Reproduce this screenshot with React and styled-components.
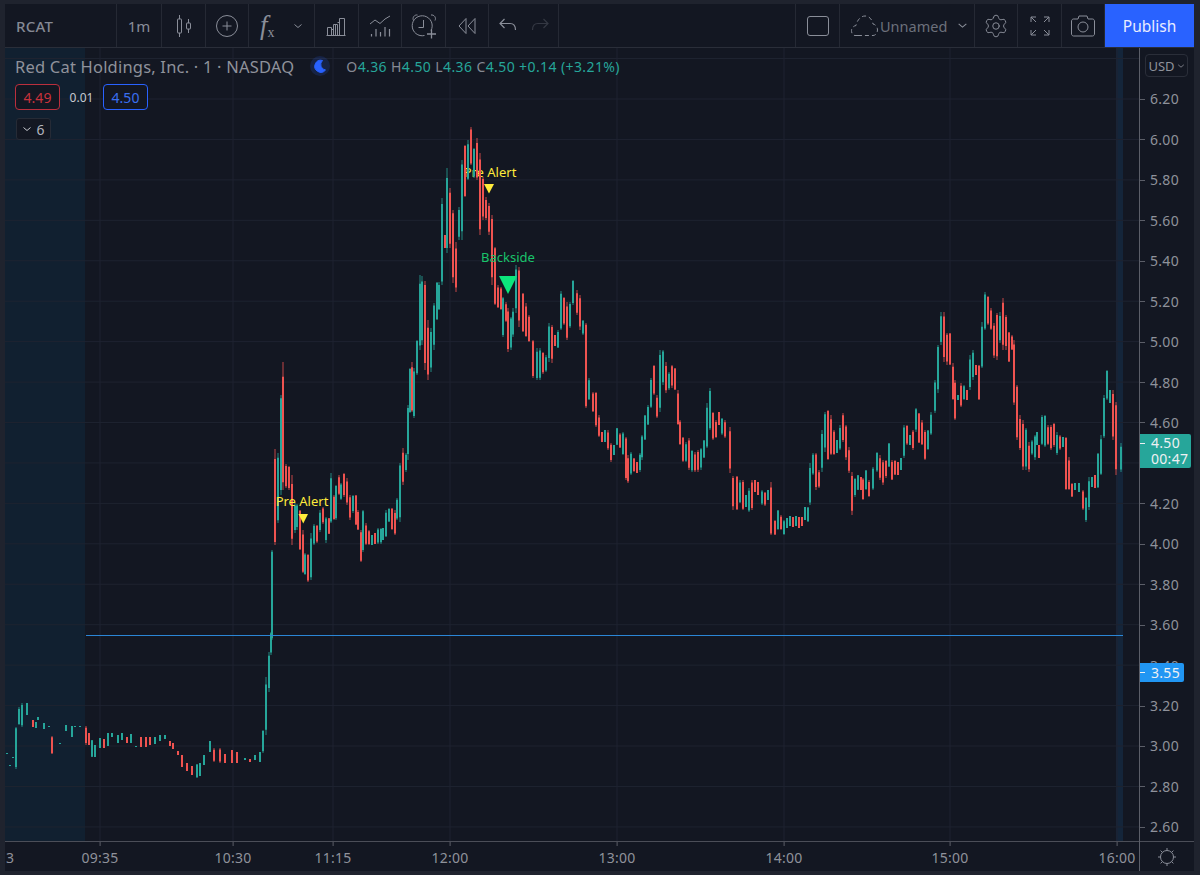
import styled, { createGlobalStyle } from "styled-components";
import { Settings } from "lucide-react";

const GlobalStyle = createGlobalStyle`
  * { box-sizing: border-box; }
  html, body { margin: 0; padding: 0; background: #1f232e; }
`;

const FONT = `"Noto Sans", "Open Sans", sans-serif`;
const UP = "#26a69a";
const DOWN = "#ef5350";

// x, top, bottom in page pixels, read off the screenshot
const BARS = [
  [7,753,754,"g"],[10,765,766,"g"],[13,757,758,"g"],[16,727,769,"g"],[19,707,725,"g"],[22,703,727,"g"],[27,703,715,"g"],
  [33,720,727,"r"],[36,722,728,"g"],[38,717,720,"g"],[44,723,729,"g"],[49,726,727,"g"],[52,736,754,"r"],[60,743,744,"g"],
  [66,725,731,"g"],[72,726,737,"g"],[75,726,727,"g"],[80,726,727,"g"],
  [86,726,745,"r"],[89,733,745,"r"],[92,740,757,"g"],[95,745,757,"g"],[100,738,748,"g"],[104,739,748,"r"],[108,733,746,"g"],[112,733,737,"g"],
  [118,735,743,"g"],[122,733,740,"g"],[127,737,743,"r"],[131,734,743,"g"],[136,746,747,"g"],[141,737,747,"r"],[146,737,747,"r"],[150,737,745,"r"],
  [155,737,744,"g"],[160,735,741,"g"],[165,735,739,"g"],[170,741,746,"r"],[173,743,749,"r"],[178,751,755,"r"],[182,755,767,"r"],[187,763,771,"r"],
  [192,766,775,"r"],[197,764,778,"g"],[200,763,776,"g"],[204,755,765,"g"],[210,741,752,"g"],[214,748,762,"r"],[220,748,763,"r"],[225,754,763,"r"],
  [232,750,763,"r"],[237,752,763,"r"],[245,758,760,"g"],[250,759,762,"r"],[255,755,760,"g"],[260,752,762,"g"],[263,730,753,"g"],[266,677,735,"g"],
  [269,652,692,"g"],[271,632,655,"g"],[272,550,640,"g"],[275,449,545,"r"],[278,453,523,"g"],[281,395,495,"g"],[283,362,490,"r"],[286,464,488,"r"],
  [289,466,490,"r"],[292,475,545,"r"],[295,503,533,"g"],[297,504,530,"g"],[300,510,550,"r"],[303,530,573,"r"],[305,553,575,"g"],[308,554,582,"r"],
  [311,533,580,"g"],[314,524,545,"g"],[317,525,543,"r"],[320,510,532,"g"],[323,507,524,"r"],[326,517,543,"g"],[329,518,534,"r"],[331,473,523,"g"],
  [334,495,520,"r"],[336,485,520,"g"],[339,475,495,"r"],[341,483,500,"g"],[344,473,497,"r"],[347,478,505,"r"],[350,495,520,"r"],[353,495,513,"g"],
  [356,495,525,"r"],[358,510,530,"r"],[361,530,562,"r"],[363,510,552,"g"],[366,523,545,"r"],[369,530,545,"r"],[372,535,545,"g"],[375,533,544,"r"],
  [378,528,544,"g"],[381,528,544,"g"],[383,528,540,"g"],[386,510,537,"g"],[389,508,522,"g"],[392,508,530,"r"],[395,510,535,"r"],[397,498,520,"g"],
  [400,463,522,"g"],[403,448,485,"r"],[406,453,472,"g"],[408,405,460,"g"],[410,368,413,"g"],[412,362,412,"r"],[414,368,418,"g"],[417,340,375,"g"],
  [420,275,350,"g"],[422,276,345,"g"],[425,281,370,"r"],[428,320,380,"r"],[431,328,372,"g"],[434,303,350,"g"],[437,282,320,"g"],[439,282,310,"g"],
  [442,198,285,"g"],[445,235,248,"r"],[447,168,253,"g"],[450,188,248,"r"],[453,210,283,"r"],[456,242,292,"r"],[459,207,240,"g"],[462,160,240,"g"],
  [465,145,197,"r"],[468,140,180,"g"],[471,127,165,"r"],[474,148,178,"g"],[477,138,180,"r"],[480,153,235,"r"],[483,177,220,"r"],[486,197,220,"r"],
  [489,203,235,"r"],[492,215,285,"r"],[495,247,305,"r"],[498,285,308,"r"],[501,287,310,"r"],[503,297,337,"g"],[506,302,322,"r"],[508,308,352,"r"],
  [511,317,350,"g"],[513,308,337,"g"],[516,265,313,"g"],[519,267,327,"r"],[523,293,332,"r"],[526,303,337,"r"],[529,315,342,"r"],[533,340,378,"r"],
  [537,348,380,"g"],[540,348,380,"g"],[543,352,374,"r"],[546,355,372,"g"],[549,323,362,"g"],[552,325,363,"r"],[555,335,346,"r"],[558,330,348,"g"],
  [561,291,330,"g"],[564,297,325,"r"],[567,302,340,"r"],[570,302,328,"g"],[573,280,305,"g"],[577,290,315,"r"],[580,295,330,"r"],[583,320,335,"g"],
  [586,323,408,"r"],[589,378,400,"g"],[593,392,412,"r"],[596,392,427,"r"],[599,415,437,"r"],[602,432,442,"r"],[605,430,442,"g"],[608,430,450,"r"],
  [611,443,462,"r"],[614,445,455,"g"],[617,428,445,"g"],[620,433,448,"r"],[623,432,455,"g"],[626,437,480,"r"],[628,455,483,"r"],[631,452,475,"g"],
  [634,458,472,"r"],[637,462,473,"r"],[640,453,472,"g"],[642,435,460,"g"],[645,415,440,"g"],[648,405,425,"g"],[651,378,408,"g"],[654,365,395,"r"],
  [657,395,418,"r"],[660,350,412,"g"],[663,350,385,"g"],[666,362,393,"r"],[669,372,390,"g"],[672,365,388,"r"],[675,368,390,"r"],[678,390,425,"r"],
  [680,420,445,"r"],[683,437,462,"r"],[686,442,462,"g"],[689,438,470,"r"],[692,450,472,"g"],[695,452,472,"r"],[698,450,472,"r"],[701,448,470,"g"],
  [704,440,458,"g"],[707,403,448,"g"],[710,388,430,"g"],[713,412,440,"r"],[716,420,438,"r"],[719,412,425,"r"],[722,418,435,"g"],[725,420,438,"r"],
  [730,427,473,"r"],[733,476,510,"r"],[737,476,510,"r"],[740,480,503,"g"],[743,480,510,"r"],[746,495,507,"g"],[749,488,512,"g"],[752,480,510,"r"],
  [755,480,492,"r"],[758,482,495,"r"],[762,490,505,"g"],[765,492,506,"r"],[768,490,500,"g"],[771,482,535,"r"],[775,520,535,"r"],[778,510,530,"g"],
  [781,515,530,"r"],[784,520,535,"g"],[787,518,528,"g"],[790,516,526,"g"],[793,517,527,"r"],[796,516,526,"g"],[799,517,528,"r"],[802,517,526,"r"],
  [805,507,520,"g"],[808,507,522,"g"],[810,463,505,"g"],[813,453,475,"g"],[816,453,490,"r"],[819,470,488,"r"],[822,430,472,"g"],[825,412,452,"g"],
  [828,410,460,"r"],[831,415,455,"r"],[834,430,455,"r"],[837,440,453,"g"],[840,425,450,"g"],[843,413,442,"r"],[846,425,460,"r"],[849,447,473,"r"],
  [852,472,515,"r"],[855,478,497,"g"],[858,475,490,"g"],[861,477,490,"r"],[863,478,500,"r"],[866,470,490,"g"],[869,480,497,"r"],[873,467,490,"g"],
  [877,452,472,"g"],[880,455,480,"r"],[883,460,485,"r"],[886,460,478,"r"],[889,443,467,"g"],[892,460,480,"r"],[895,460,475,"r"],[898,462,475,"r"],
  [901,458,470,"g"],[904,425,458,"g"],[907,425,445,"r"],[910,435,445,"g"],[913,430,450,"r"],[916,408,432,"g"],[919,413,443,"r"],[922,420,445,"r"],
  [925,430,460,"r"],[928,430,450,"g"],[931,412,435,"g"],[935,380,413,"g"],[938,345,393,"g"],[941,312,345,"g"],[944,312,362,"r"],[947,333,365,"r"],
  [950,333,365,"r"],[953,363,400,"r"],[955,380,420,"r"],[958,395,400,"g"],[961,383,407,"r"],[964,385,400,"g"],[967,390,400,"r"],[970,355,390,"g"],
  [973,350,380,"g"],[976,365,375,"r"],[979,365,400,"r"],[982,322,368,"g"],[985,292,330,"g"],[988,296,325,"r"],[991,308,330,"r"],[994,323,358,"r"],
  [997,313,360,"r"],[1000,312,343,"g"],[1003,298,350,"r"],[1006,315,350,"r"],[1009,332,362,"r"],[1012,335,350,"r"],[1014,340,405,"r"],[1017,385,440,"r"],
  [1020,415,450,"r"],[1023,420,470,"r"],[1026,428,470,"g"],[1029,442,472,"r"],[1032,440,455,"g"],[1035,435,460,"g"],[1037,432,445,"g"],[1039,445,458,"r"],
  [1042,415,445,"g"],[1045,415,447,"g"],[1048,425,445,"r"],[1051,425,450,"r"],[1054,423,447,"r"],[1057,432,455,"g"],[1060,435,450,"r"],[1063,437,447,"g"],
  [1066,437,490,"r"],[1069,457,490,"r"],[1072,483,497,"r"],[1075,483,490,"g"],[1079,483,492,"g"],[1083,490,510,"r"],[1086,497,522,"g"],[1089,477,510,"g"],
  [1092,477,487,"g"],[1095,475,488,"r"],[1098,453,488,"g"],[1101,435,475,"g"],[1104,395,438,"g"],[1107,370,400,"g"],[1110,390,403,"g"],[1113,390,440,"r"],
  [1116,402,475,"r"],[1121,443,472,"g"],
];

const PRICES = ["6.20","6.00","5.80","5.60","5.40","5.20","5.00","4.80","4.60","4.40","4.20","4.00","3.80","3.60","3.40","3.20","3.00","2.80","2.60"];
const HIDDEN_PRICE = "4.40"; // sits fully under the last price tag
const STEP = 40.44;
const FIRST_Y = 99;
const TIMES = [["09:35",100],["10:30",233],["11:15",333],["12:00",450],["13:00",617],["14:00",784],["15:00",950],["16:00",1117]];

function buildPaths() {
  const d = { g: { wick: "", body: "" }, r: { wick: "", body: "" } };
  BARS.forEach(([x, top, bottom, c], i) => {
    const h = bottom - top;
    const seed = (i * 37) % 10;
    const bodyTop = h < 14 ? top : top + h * (0.02 + seed * 0.012);
    const bodyBottom = h < 14 ? bottom : bottom - h * (0.02 + ((seed * 3) % 10) * 0.01);
    d[c].wick += `M${x} ${top}V${bottom}`;
    d[c].body += `M${x} ${bodyTop.toFixed(1)}V${bodyBottom.toFixed(1)}`;
  });
  return d;
}
const candlePaths = buildPaths();

const Page = styled.div`
  width: 1200px;
  height: 875px;
  overflow: hidden;
  padding: 4px 6px 4px 5px;
  background: #1f232e;
  display: flex;
  flex-direction: column;
  font-family: ${FONT};
`;

const Toolbar = styled.div`
  height: 44px;
  flex: none;
  display: flex;
  background: #131722;
  border-bottom: 1px solid #2a2e39;
  color: #8a8e99;
`;

const Cell = styled.div`
  width: ${({ $w }) => $w}px;
  flex: none;
  display: flex;
  align-items: center;
  justify-content: ${({ $start }) => ($start ? "flex-start" : "center")};
  padding-left: ${({ $start }) => ($start ? "11px" : "0")};
  gap: ${({ $gap }) => $gap || 0}px;
  border-right: 1px solid #252934;
`;

const Spacer = styled.div`
  flex: 1;
  border-right: 1px solid #252934;
`;

const Symbol = styled.span`
  font-size: 15px;
  font-weight: 500;
  color: #858994;
  letter-spacing: 0.2px;
`;

const ToolText = styled.span`
  font-size: ${({ $dim }) => ($dim ? "14.5px" : "15px")};
  color: ${({ $dim }) => ($dim ? "#6c707b" : "#8a8e99")};
`;

const Fx = styled.span`
  font-family: "Liberation Serif", serif;
  font-style: italic;
  font-size: 27px;
  line-height: 1;
  color: #8a8e99;
  sub {
    font-size: 14px;
    font-style: normal;
    vertical-align: -3px;
  }
`;

const Publish = styled.div`
  width: 89px;
  flex: none;
  background: #2962ff;
  color: #e8ecff;
  font-size: 15.5px;
  display: flex;
  align-items: center;
  justify-content: center;
`;

const Icon = styled.svg`
  display: block;
  fill: none;
  stroke: ${({ $color }) => $color || "currentColor"};
  stroke-width: 1;
  flex: none;
`;

const Gap = styled.span`
  width: 6px;
  flex: none;
`;

const ChartRow = styled.div`
  height: 793px;
  flex: none;
  display: grid;
  grid-template-columns: 1134px 55px;
  background: #131722;
`;

const Plot = styled.div`
  position: relative;
  overflow: hidden;
`;

const Canvas = styled.svg`
  display: block;
  width: 1134px;
  height: 793px;
`;

const MarkerText = styled.text`
  font-family: ${FONT};
  font-size: 13px;
  text-anchor: middle;
  fill: ${({ $color }) => $color};
`;

const Legend = styled.div`
  position: absolute;
  left: 10px;
  top: 7px;
  display: flex;
  flex-direction: column;
  align-items: flex-start;
`;

const TitleRow = styled.div`
  height: 22px;
  display: flex;
  align-items: center;
`;

const Title = styled.span`
  font-size: 16.5px;
  color: #8f929b;
  letter-spacing: 0.2px;
  white-space: nowrap;
`;

const Moon = styled.span`
  width: 20px;
  height: 20px;
  margin: 0 16px 0 16px;
  border-radius: 50%;
  background: rgba(41, 98, 255, 0.16);
  display: flex;
  align-items: center;
  justify-content: center;
`;

const Ohlc = styled.span`
  font-size: 14px;
  color: ${UP};
  white-space: pre;
  letter-spacing: 0.4px;
  b {
    font-weight: 400;
    color: #868993;
  }
`;

const QuoteRow = styled.div`
  display: flex;
  align-items: center;
  margin-top: 7px;
`;

const QuoteBox = styled.span`
  width: 45px;
  height: 26px;
  border: 1px solid ${({ $color }) => $color};
  border-radius: 4px;
  background: #131722;
  color: ${({ $text }) => $text};
  font-size: 14px;
  display: flex;
  align-items: center;
  justify-content: center;
`;

const Spread = styled.span`
  width: 43px;
  text-align: center;
  font-size: 12px;
  color: #c8cad0;
`;

const Collapse = styled.div`
  width: 35px;
  height: 22px;
  margin: 8px 0 0 1px;
  border: 1px solid #262b36;
  border-radius: 3px;
  background: #131722;
  color: #b2b5be;
  font-size: 14px;
  display: flex;
  align-items: center;
  justify-content: center;
  gap: 4px;
`;

const PriceAxis = styled.div`
  position: relative;
  border-left: 1px solid #5b5e68;
  padding-top: ${FIRST_Y - 48 - STEP / 2}px;
  display: flex;
  flex-direction: column;
`;

const PriceLabel = styled.div`
  height: ${STEP}px;
  flex: none;
  padding-left: 10px;
  display: flex;
  align-items: center;
  font-size: 14px;
  letter-spacing: 0.3px;
  color: #8f929b;
  position: relative;
  &::before {
    content: "";
    position: absolute;
    left: 0;
    top: 50%;
    width: 5px;
    height: 1px;
    background: #5b5e68;
  }
`;

const Currency = styled.div`
  position: absolute;
  left: 5px;
  top: 6px;
  width: 43px;
  height: 23px;
  border: 1px solid #2a2e39;
  border-radius: 4px;
  background: #131722;
  color: #8f929b;
  font-size: 13px;
  display: flex;
  align-items: center;
  justify-content: center;
  gap: 2px;
`;

const PriceTag = styled.div`
  position: absolute;
  left: 0;
  top: ${({ $top }) => $top}px;
  width: ${({ $w }) => $w}px;
  height: ${({ $h }) => $h}px;
  padding-left: 11px;
  background: ${({ $bg }) => $bg};
  border-radius: 0 2px 2px 0;
  color: #eef0f3;
  font-size: 14px;
  line-height: 16px;
  letter-spacing: 0.3px;
  display: flex;
  flex-direction: column;
  justify-content: center;
  &::before {
    content: "";
    position: absolute;
    left: 0;
    top: 9px;
    width: 5px;
    height: 1px;
    background: #eef0f3;
  }
`;

const BottomRow = styled.div`
  height: 30px;
  flex: none;
  display: grid;
  grid-template-columns: 1134px 55px;
  background: #131722;
  border-top: 1px solid #4b4e58;
`;

const TimeAxis = styled.div`
  position: relative;
  overflow: hidden;
`;

const TimeLabel = styled.span`
  position: absolute;
  top: 6px;
  transform: translateX(-50%);
  font-size: 14px;
  letter-spacing: 0.2px;
  color: #8f929b;
  &::before {
    content: "";
    position: absolute;
    left: 50%;
    top: -6px;
    width: 1px;
    height: 4px;
    background: #5b5e68;
  }
`;

const PartialLabel = styled.span`
  position: absolute;
  top: 6px;
  left: 1px;
  font-size: 14px;
  color: #8f929b;
`;

const Corner = styled.div`
  border-left: 1px solid #5b5e68;
  color: #8a8e99;
  display: flex;
  align-items: center;
  justify-content: center;
`;

function Chevron({ size = 10, color }) {
  return (
    <Icon $color={color} width={size} height={size} viewBox="0 0 10 10">
      <path d="M1.5 3.5 5 6.5l3.5-3" />
    </Icon>
  );
}

function Chart() {
  return (
    <Canvas viewBox="5 48 1134 793">
      <rect x="5" y="48" width="80" height="793" fill="#112030" />
      <rect x="1116" y="48" width="7" height="793" fill="#14253a" />
      {PRICES.map((p, i) => (
        <line key={p} x1="5" x2="1139" y1={FIRST_Y + i * STEP} y2={FIRST_Y + i * STEP} stroke="#1e2330" />
      ))}
      <line x1="5" x2="1139" y1="58.5" y2="58.5" stroke="#1e2330" />
      {TIMES.map(([t, x]) => (
        <line key={t} x1={x} x2={x} y1="48" y2="841" stroke="#1e2330" />
      ))}

      <MarkerText x="490" y="176.5" $color="#ffeb3b">Pre Alert</MarkerText>

      <g fill="none">
        <path d={candlePaths.g.wick} stroke={UP} strokeOpacity="0.8" strokeWidth="1" />
        <path d={candlePaths.g.body} stroke={UP} strokeWidth="2" />
        <path d={candlePaths.r.wick} stroke={DOWN} strokeOpacity="0.8" strokeWidth="1" />
        <path d={candlePaths.r.body} stroke={DOWN} strokeWidth="2" />
      </g>

      <rect x="86" y="635" width="1037" height="1" fill="#2b86d6" />

      <MarkerText x="302" y="505.5" $color="#ffeb3b">Pre Alert</MarkerText>
      <path d="M298.5 514h9.500l-4.750 9.500z" fill="#ffeb3b" />
      <path d="M484 184h10l-5 9.500z" fill="#ffeb3b" />
      <MarkerText x="508" y="262" $color="#19c46b">Backside</MarkerText>
      <path d="M499 276h18l-9 18z" fill="#0ce67c" />
    </Canvas>
  );
}

export default function App() {
  return (
    <>
      <GlobalStyle />
      <Page>
        <Toolbar>
          <Cell $w={112} $start><Symbol>RCAT</Symbol></Cell>
          <Cell $w={45}><ToolText>1m</ToolText></Cell>
          <Cell $w={44}>
            <Icon width="26" height="26" viewBox="0 0 26 26">
              <path d="M8.500 2v4M8.500 20v4M17.500 6v4M17.500 16v4" />
              <rect x="6.500" y="6" width="4" height="14" rx="0.5" />
              <rect x="15.500" y="10" width="4" height="6" rx="0.5" />
            </Icon>
          </Cell>
          <Cell $w={43}>
            <Icon width="24" height="24" viewBox="0 0 24 24">
              <circle cx="12" cy="12" r="10.500" />
              <path d="M12 7.500v9M7.500 12h9" />
            </Icon>
          </Cell>
          <Cell $w={66} $gap={18} $start>
            <Fx>f<sub>x</sub></Fx>
            <Chevron />
          </Cell>
          <Cell $w={43.500}>
            <Icon width="22" height="22" viewBox="0 0 22 22">
              <path d="M1.500 20.500h19M2.500 20.500v-8h4v8M8.500 20.500v-11h4v11M14.500 20.500v-17h5v17M10.500 9.500v11M6.500 14.500h2M12.500 7.500h2" />
            </Icon>
          </Cell>
          <Cell $w={43.500}>
            <Icon width="24" height="24" viewBox="0 0 24 24">
              <path d="M2 10l5-4 5 3.500L17 5l5-3" />
              <path d="M3.500 20v2.500M8 15v7.500M12.500 18v4.500M17 13v9.500M21.500 15v7.500" strokeWidth="1.200" />
            </Icon>
          </Cell>
          <Cell $w={44}>
            <Icon width="28" height="28" viewBox="0 0 28 28">
              <path d="M21 18.500A10 10 0 1 0 14.500 23.500" />
              <path d="M3.500 8.500c-1.500-3 1-6 4-5.500M21 3c3-.5 5.500 2.500 4 5.500" />
              <path d="M13.500 8v7.500H8.500" />
              <path d="M21.500 17.500v9M17 22h9" strokeWidth="1.300" />
            </Icon>
          </Cell>
          <Cell $w={43}>
            <Icon width="22" height="22" viewBox="0 0 22 22">
              <path d="M10 3.500 3 11l7 7.500zM19 3.500 12 11l7 7.500z" />
            </Icon>
          </Cell>
          <Cell $w={70} $gap={12}>
            <Icon width="20" height="20" viewBox="0 0 20 20">
              <path d="M2 7.500h10c3.500 0 5.500 2.500 5.500 6.500M6.500 3 2 7.500 6.500 12" strokeWidth="1.200" />
            </Icon>
            <Icon $color="#343843" width="20" height="20" viewBox="0 0 20 20">
              <path d="M18 7.500H8c-3.500 0-5.500 2.500-5.500 6.500M13.500 3 18 7.500 13.500 12" strokeWidth="1.200" />
            </Icon>
          </Cell>
          <Spacer />
          <Cell $w={44}>
            <Icon width="22" height="20" viewBox="0 0 22 20">
              <rect x="0.500" y="0.500" width="21" height="19" rx="2.500" />
            </Icon>
          </Cell>
          <Cell $w={135} $gap={2} $start>
            <Icon width="27" height="22" viewBox="0 0 27 22">
              <path d="M7 20.500H4C1 20.500 .5 17 .5 15.500 .5 13 2.500 11 5 10.500 6 5 10 1 14 1c4 0 7 3 8 8 2.500.5 4.500 3 4.500 6 0 3-2 5.500-4.500 5.500H7z" strokeDasharray="4 3" />
            </Icon>
            <ToolText $dim>Unnamed</ToolText>
            <Gap />
            <Chevron size={11} />
          </Cell>
          <Cell $w={43}>
            <Settings size={26} strokeWidth={0.9} />
          </Cell>
          <Cell $w={44}>
            <Icon width="20" height="20" viewBox="0 0 20 20">
              <path d="M1 6V1h5M1 1l5 5M14 1h5v5M19 1l-5 5M1 14v5h5M1 19l5-5M14 19h5v-5M19 19l-5-5" />
            </Icon>
          </Cell>
          <Cell $w={43}>
            <Icon width="24" height="22" viewBox="0 0 24 22">
              <path d="M2.500 4H7l1-3h8l1 3h4.500c1 0 2 1 2 2v13c0 1-1 2-2 2h-19c-1 0-2-1-2-2V6c0-1 1-2 2-2z" />
              <circle cx="12" cy="12" r="5" />
            </Icon>
          </Cell>
          <Publish>Publish</Publish>
        </Toolbar>

        <ChartRow>
          <Plot>
            <Chart />
            <Legend>
              <TitleRow>
                <Title>Red Cat Holdings, Inc. · 1 · NASDAQ</Title>
                <Moon>
                  <Icon width="14" height="14" viewBox="0 0 14 14">
                    <path d="M9.500 1.500a6 6 0 1 0 3 9.500 5.500 5.500 0 0 1-3-9.500z" fill="#2962ff" stroke="#2962ff" />
                  </Icon>
                </Moon>
                <Ohlc><b>O</b>4.36 <b>H</b>4.50 <b>L</b>4.36 <b>C</b>4.50 +0.14 (+3.21%)</Ohlc>
              </TitleRow>
              <QuoteRow>
                <QuoteBox $color="#bb2f3d" $text="#c9323c">4.49</QuoteBox>
                <Spread>0.01</Spread>
                <QuoteBox $color="#2962ff" $text="#3a6ff0">4.50</QuoteBox>
              </QuoteRow>
              <Collapse>
                <Chevron color="#c8cad0" />
                6
              </Collapse>
            </Legend>
          </Plot>
          <PriceAxis>
            <Currency>USD<Chevron size={8} /></Currency>
            {PRICES.map((p) => (
              <PriceLabel key={p}>{p === HIDDEN_PRICE ? null : p}</PriceLabel>
            ))}
            <PriceTag $top={386} $w={51} $h={34} $bg="#26a69a">
              <span>4.50</span>
              <span>00:47</span>
            </PriceTag>
            <PriceTag $top={615} $w={44} $h={19} $bg="#2196f3">3.55</PriceTag>
          </PriceAxis>
        </ChartRow>

        <BottomRow>
          <TimeAxis>
            <PartialLabel>3</PartialLabel>
            {TIMES.map(([t, x]) => (
              <TimeLabel key={t} style={{ left: x - 5 }}>{t}</TimeLabel>
            ))}
          </TimeAxis>
          <Corner>
            <Icon width="20" height="20" viewBox="0 0 20 20">
              <circle cx="10" cy="10" r="6.500" />
              <path d="M10 1v2.500M10 16.500V19M1 10h2.500M16.500 10H19M3.600 3.600l1.800 1.800M14.600 14.600l1.800 1.800M3.600 16.400l1.800-1.800M14.600 5.400l1.800-1.800" />
            </Icon>
          </Corner>
        </BottomRow>
      </Page>
    </>
  );
}
